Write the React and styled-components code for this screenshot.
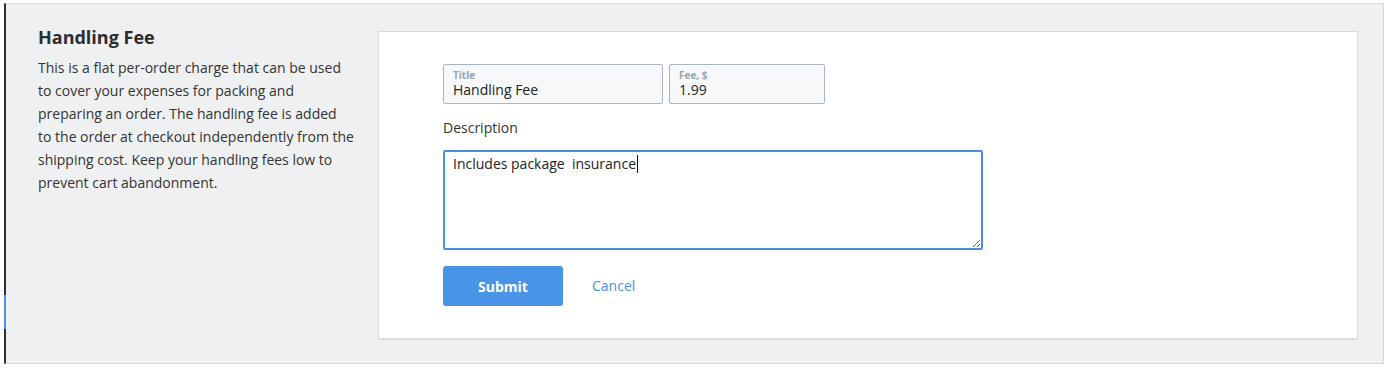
import React from "react";
import styled, { createGlobalStyle } from "styled-components";

const GlobalStyle = createGlobalStyle`
  html, body {
    margin: 0;
    padding: 0;
    background: #fff;
  }
  body {
    font-family: "Open Sans", "Liberation Sans", sans-serif;
    color: #333;
  }
`;

const Panel = styled.section`
  position: relative;
  margin: 3px 4px 0 4px;
  display: flex;
  align-items: flex-start;
  gap: 20px;
  padding: 27px 25px 24px 32px;
  background: #eff0f2;
  border-top: 1px solid #dadcdf;
  border-right: 1px solid #d6d8db;
  border-bottom: 1px solid #d3d5d8;
  border-left: 2px solid #2e2e2e;

  /* focus mark on the left edge */
  &::before {
    content: "";
    position: absolute;
    left: -2px;
    top: 291px;
    width: 2px;
    height: 34px;
    background: #4a90e2;
  }
`;

const Info = styled.div`
  flex: 0 0 320px;
  h3 {
    margin: -3px 0 10px;
    font-size: 18px;
    line-height: 18px;
    font-weight: 700;
    color: #2b2d30;
  }
  p {
    margin: 0;
    font-size: 14px;
    line-height: 23px;
    color: #333;
    white-space: nowrap;
  }
`;

const Card = styled.div`
  flex: 1;
  background: #fff;
  border: 1px solid #d5dae0;
  box-shadow: 0 1px 1px rgba(0, 0, 0, 0.06);
  padding: 32px 64px 32px;
`;

const Row = styled.div`
  display: flex;
  gap: 6px;
`;

const Field = styled.label`
  display: flex;
  flex-direction: column;
  box-sizing: border-box;
  width: ${({ $w }) => $w}px;
  height: 40px;
  padding: 5px 9px 0;
  border: 1px solid #a8b4c0;
  border-radius: 2px;
  background: #f6f8f9;

  span {
    font-size: 10px;
    line-height: 11px;
    font-weight: 700;
    color: #9aa5b1;
  }
  strong {
    font-size: 14px;
    line-height: 18px;
    font-weight: 400;
    color: #222;
  }
`;

const Label = styled.div`
  margin: 14px 0 12px;
  font-size: 14px;
  line-height: 20px;
  color: #333;
`;

const TextBox = styled.div`
  box-sizing: border-box;
  width: 540px;
  height: 100px;
  padding: 2px 8px;
  border: 2px solid #4a90e2;
  border-radius: 2px;
  font-size: 14px;
  line-height: 20px;
  color: #222;
  white-space: pre;
  resize: vertical;
  overflow: auto;
`;

const Caret = styled.span`
  display: inline-block;
  width: 1px;
  height: 18px;
  margin-left: 1px;
  vertical-align: -4px;
  background: #111;
`;

const Actions = styled.div`
  display: flex;
  align-items: center;
  gap: 29px;
  margin-top: 16px;
`;

const Button = styled.button`
  width: 120px;
  height: 40px;
  border: none;
  border-radius: 3px;
  background: #4a94e8;
  color: #fff;
  font-family: inherit;
  font-size: 14px;
  font-weight: 700;
  cursor: pointer;
`;

const LinkButton = styled.a`
  margin-top: -2px;
  font-size: 14px;
  color: #4a90e2;
  text-decoration: none;
  cursor: pointer;
`;

const infoLines = [
  "This is a flat per-order charge that can be used",
  "to cover your expenses for packing and",
  "preparing an order. The handling fee is added",
  "to the order at checkout independently from the",
  "shipping cost. Keep your handling fees low to",
  "prevent cart abandonment.",
];

const App = () => {
  return (
    <>
      <GlobalStyle />
      <Panel>
        <Info>
          <h3>Handling Fee</h3>
          <p>
            {infoLines.map((line, i) => (
              <React.Fragment key={i}>
                {line}
                {i < infoLines.length - 1 && <br />}
              </React.Fragment>
            ))}
          </p>
        </Info>
        <Card>
          <Row>
            <Field $w={220}>
              <span>Title</span>
              <strong>Handling Fee</strong>
            </Field>
            <Field $w={156}>
              <span>Fee, $</span>
              <strong>1.99</strong>
            </Field>
          </Row>
          <Label>Description</Label>
          <TextBox>
            Includes package  insurance
            <Caret />
          </TextBox>
          <Actions>
            <Button>Submit</Button>
            <LinkButton>Cancel</LinkButton>
          </Actions>
        </Card>
      </Panel>
    </>
  );
};

export default App;
